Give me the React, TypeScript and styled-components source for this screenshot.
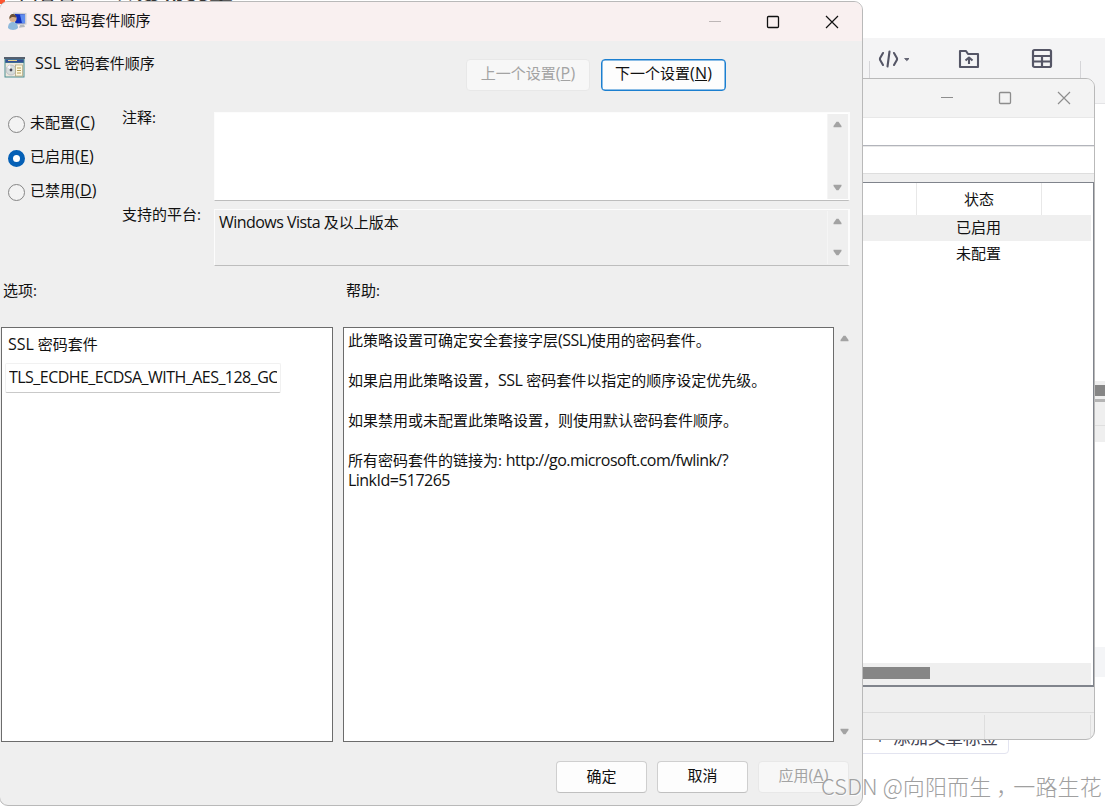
import React from "react";
import styled, { createGlobalStyle, css } from "styled-components";

const Global = createGlobalStyle`
  *, *::before, *::after { box-sizing: border-box; }
  html, body { margin: 0; padding: 0; }
  body {
    width: 1105px; height: 806px; overflow: hidden; background: #fff; color: #111;
    font-family: "Open Sans", "Noto Sans CJK SC", sans-serif;
    font-size: 15px; line-height: 20px;
  }
`;

const Desktop = styled.div`
  position: relative;
  width: 1105px;
  height: 806px;
  overflow: hidden;
  background: #fff;
`;

/* Latin runs are slightly larger and tightened to sit next to the ideographs */
const L = styled.span<{ $ls?: number }>`
  font-size: 16px;
  line-height: 1;
  letter-spacing: ${(p) => p.$ls ?? -0.54}px;
`;

/* ---------- web editor behind the windows ---------- */
const Editor = styled.div`
  display: flex;
  flex-direction: column;
  height: 806px;
`;
const EditorTop = styled.div`
  display: flex;
  height: 38px;
  overflow: hidden;
  color: #333;
`;
const TopText = styled.span<{ $ml: number; $mt: number; $size: number }>`
  margin: ${(p) => p.$mt}px 0 0 ${(p) => p.$ml}px;
  height: 24px;
  font-size: ${(p) => p.$size}px;
  line-height: 24px;
  font-weight: 500;
  white-space: nowrap;
`;
const Logo = styled.span`
  width: 5px;
  height: 4px;
  background: #fc5531;
`;
const EditorBar = styled.div`
  display: flex;
  height: 66px;
  padding-left: 869px;
  background: #f4f4f5;
  border-bottom: 1px solid #e4e4e6;
  color: #555666;
`;
const BarRule = styled.i<{ $ml?: number }>`
  width: 1px;
  margin: 23px 0 0 ${(p) => p.$ml ?? 0}px;
  background: #d5d5d8;
`;
const BarIcon = styled.svg<{ $ml: number }>`
  margin: 9px 0 0 ${(p) => p.$ml}px;
  flex: none;
`;
const EditorBody = styled.div`
  display: flex;
  flex-direction: column;
  align-items: flex-end;
  flex: 1;
  padding-top: 277px;
`;
const Strip = styled.div<{ $h: number; $c: string; $mt?: number }>`
  width: 11px;
  height: ${(p) => p.$h}px;
  margin-top: ${(p) => p.$mt ?? 0}px;
  background: ${(p) => p.$c};
`;
const TagButton = styled.div`
  display: flex;
  gap: 8px;
  width: 160px;
  height: 32px;
  margin: 45px 96px 0 0;
  padding-left: 25px;
  border: 1px solid #e3e4f0;
  border-radius: 4px;
  color: #444554;
  font-size: 17.5px;
  line-height: 28px;
  white-space: nowrap;
`;

/* ---------- shared window parts ---------- */
const WindowFrame = styled.section`
  position: absolute;
  display: flex;
  flex-direction: column;
  overflow: hidden;
  background: #efefef;
  border: 1px solid #b9b9b9;
`;
const Controls = styled.div`
  display: flex;
  margin-left: auto;
`;
const Control = styled.span`
  display: flex;
  width: 58.5px;
  justify-content: center;
  align-items: center;
`;

const WindowControls = ({ color, min }: { color: string; min: string }) => (
  <Controls>
    <Control>
      <svg width="14" height="14" fill="none" stroke={min}><path d="M1 6.5h12" /></svg>
    </Control>
    <Control>
      <svg width="14" height="14" fill="none" stroke={color} strokeWidth="1.3"><rect x="1.5" y="1.5" width="11" height="11" rx="1" /></svg>
    </Control>
    <Control>
      <svg width="14" height="14" fill="none" stroke={color} strokeWidth="1.2"><path d="M1 1l12 12M13 1L1 13" /></svg>
    </Control>
  </Controls>
);

/* ---------- policy list window ---------- */
const ListWindow = styled(WindowFrame)`
  left: 600px;
  top: 78px;
  width: 495px;
  height: 662px;
  border-radius: 9px;
`;
const ListTitle = styled.header`
  display: flex;
  height: 38px;
  padding-right: 1px;
  background: #f3f3f3;
`;
const MenuRow = styled.div<{ $line: string; $h: number }>`
  height: ${(p) => p.$h}px;
  background: #fff;
  border-top: 1px solid #e8e8e8;
  border-bottom: 1px solid ${(p) => p.$line};
`;
const ListBox = styled.div`
  display: flex;
  flex-direction: column;
  height: 505px;
  margin-top: 8px;
  background: #fff;
  border: solid #80848c;
  border-width: 1px 1px 2px 0;
`;
const ListHeader = styled.div`
  display: grid;
  grid-template-columns: 315px 125px 1fr;
  height: 32px;
  > span { border-left: 1px solid #e8e8e8; text-align: center; line-height: 33px; }
`;
const ListRow = styled.div<{ $on?: boolean }>`
  display: grid;
  grid-template-columns: 315px 125px 1fr;
  height: 26px;
  margin-right: 2px;
  line-height: 25px;
  text-align: center;
  background: ${(p) => (p.$on ? "#efefef" : "#fff")};
`;
const HScroll = styled.div`
  height: 22px;
  margin: auto 2px 0 0;
  padding-top: 4px;
  background: #efefef;
  &::before { content: ""; display: block; width: 329px; height: 12px; background: #868686; }
`;
const Status = styled.div`
  display: grid;
  grid-template-columns: 384px 106px 1fr;
  flex: 1;
  margin-top: 25px;
  padding-top: 2px;
  border-top: 1px solid #dcdcdc;
  > span { border-right: 1px solid #dedede; }
`;

/* ---------- policy dialog ---------- */
const Dialog = styled(WindowFrame)`
  left: -1px;
  top: 1px;
  width: 864px;
  height: 805px;
  border-radius: 9px;
`;
const DialogTitle = styled.header`
  display: flex;
  height: 39px;
  padding: 0 1px 0 7px;
  background: #f9f0f0;
  line-height: 37px;
  > svg { margin: 9px 6px 0 0; }
`;
const Heading = styled.div`
  display: flex;
  height: 71px;
  padding: 16px 0 0 4px;
  > svg { flex: none; }
`;
const HeadingText = styled.span`
  width: 431px;
  margin: -4px 0 0 10px;
`;
const Button = styled.button<{ $w: number; $kind?: "off" | "focus"; $lift?: number }>`
  width: ${(p) => p.$w}px;
  height: 32px;
  padding: 0 0 ${(p) => p.$lift ?? 4}px;
  border: 1px solid #cfcfcf;
  border-bottom-color: #c0c0c0;
  border-radius: 4px;
  background: #fdfdfd;
  color: #111;
  font: inherit;
  white-space: nowrap;
  ${(p) => p.$kind === "off" && css`
    border-color: #e8e8e8; background: #f7f7f7; color: #a3a3a3;
  `}
  ${(p) => p.$kind === "focus" && css`
    border-color: #1b7fd0; box-shadow: inset 0 0 0 0.5px #1b7fd0;
  `}
`;
const NavButtons = styled.div`
  display: flex;
  gap: 11px;
  margin-top: 2px;
`;
const Settings = styled.div`
  display: grid;
  grid-template-columns: 122px 92px 636px;
  height: 169px;
`;
const Radios = styled.div`
  display: flex;
  flex-direction: column;
  gap: 14px;
  padding: 1px 0 0 8px;
`;
const Radio = styled.label<{ $on?: boolean }>`
  display: flex;
  height: 20px;
  align-items: center;
  gap: 5px;
  line-height: 18px;
  &::before {
    content: "";
    width: 17px;
    height: 17px;
    margin-top: 2px;
    border-radius: 50%;
    background: ${(p) => (p.$on ? "#fff" : "#f3f3f3")};
    border: ${(p) => (p.$on ? "5px solid #0560b6" : "1px solid #858585")};
  }
  > span { margin-top: -2px; }
`;
const FieldNames = styled.div`
  display: flex;
  flex-direction: column;
  gap: 77px;
  margin-top: -5px;
`;
const Fields = styled.div`
  display: flex;
  flex-direction: column;
  gap: 8px;
`;
const Area = styled.div<{ $h: number; $grey?: boolean }>`
  display: flex;
  justify-content: space-between;
  height: ${(p) => p.$h}px;
  padding-left: 4px;
  border: 1px solid #fcfcfc;
  border-right-width: 2px;
  border-bottom: 1px solid #bdbdbd;
  background: ${(p) => (p.$grey ? "#efefef" : "#fff")};
  line-height: 24px;
`;
const Track = styled.div`
  display: flex;
  flex-direction: column;
  justify-content: space-between;
  width: 21px;
  margin: 1px 0;
  padding: 7px 0 8px 5px;
  background: #efefef;
  border-left: 1px solid #f5f5f5;
`;
const Up = () => <svg width="9" height="7" fill="#a3a3a3"><path d="M3.5 .8h2L8.5 5v1.2h-8V5z" /></svg>;
const Down = () => <svg width="9" height="7" fill="#a3a3a3"><path d="M3.5 6.2h2L8.5 2V.8h-8V2z" /></svg>;

const PaneNames = styled.div`
  display: grid;
  grid-template-columns: 343px 1fr;
  height: 46px;
  padding-left: 3px;
  line-height: 18px;
`;
const Panes = styled.div`
  display: grid;
  grid-template-columns: 332px 491px 20px;
  column-gap: 10px;
  height: 415px;
  margin-left: 1px;
`;
const Pane = styled.div`
  background: #fff;
  border: 1px solid #6c6c6c;
  overflow: hidden;
`;
const OptionName = styled.div`
  margin: 6px 0 0 6px;
`;
const OptionInput = styled.div`
  width: 276px;
  height: 30px;
  margin: 9px 0 0 3px;
  padding: 0 3px;
  border: 1px solid #f1f1f1;
  border-bottom-color: #c9c9c9;
  border-radius: 2px;
  line-height: 27px;
  > span { display: block; overflow: hidden; white-space: nowrap; }
`;
const HelpText = styled.p`
  margin: 2px 0 20px 4px;
  & + & { margin-top: 0; }
`;
const PaneTrack = styled.div`
  display: flex;
  flex-direction: column;
  justify-content: space-between;
  margin-left: -4px;
  padding: 8px 0 7px;
`;
const Footer = styled.footer`
  display: flex;
  gap: 10px;
  padding: 19px 0 0 556px;
`;
const Watermark = styled.div`
  position: absolute;
  left: 821px;
  top: 771px;
  font-size: 22px;
  line-height: 28px;
  letter-spacing: 0.1px;
  font-weight: 300;
  font-family: "Noto Sans CJK SC", sans-serif;
  white-space: nowrap;
  color: #a0a0a0;
  text-shadow: 1px 1px 0 rgba(255, 255, 255, 0.8);
`;
const Comma = styled.span`
  margin: 0 -5px 0 5px;
`;

const UserMonitorIcon = () => (
  <svg width="20" height="20" viewBox="0 0 20 20">
    <path d="M6 1.500L19.500 2V13.500L8 14z" fill="#c9ccd2" />
    <path d="M8 3l10 .6v8.600L8 12.500z" fill="#1230bd" />
    <path d="M13 3.400l5 .3v8.300l-3 .3z" fill="#5f8df0" />
    <path d="M13 14l4-.5 1 2.500-6 .8z" fill="#b5b8bd" />
    <circle cx="6" cy="7.500" r="3.600" fill="#d8b08c" />
    <path d="M2.500 8c-.5-4 2-5.500 4-5s3 2 2.500 3.500C6.500 5.500 4 5.500 2.500 8z" fill="#6b5138" />
    <path d="M1 17c0-4 2-6 4.800-6S11 13 11 17c-2 2.500-8 2.500-10 0z" fill="#8fb9dc" />
  </svg>
);
const PolicyIcon = () => (
  <svg width="21" height="21" viewBox="0 0 21 21">
    <rect x=".5" y="1" width="20" height="19.500" fill="#4d8f92" />
    <rect x="0" y="0" width="21" height="2" fill="#55606e" />
    <rect x="1.500" y="2.500" width="18" height="3" fill="#354f96" />
    <path d="M4 3.500h9" stroke="#e8d48a" />
    <rect x="1.500" y="6" width="18" height="13.500" fill="#ece8dc" />
    <circle cx="7" cy="13" r="5" fill="#d6dcda" stroke="#aab" strokeWidth=".6" />
    <path d="M7 13L3 10l3-2z" fill="#f7f7ff" />
    <circle cx="7" cy="13" r="1.400" fill="#445" />
    <rect x="11.500" y="8" width="7" height="11" fill="#fdf7df" stroke="#a89d77" strokeWidth=".7" />
    <path d="M13 11h4M13 13.500h4M13 16h4" stroke="#b39e55" />
  </svg>
);

const K = ({ k }: { k: string }) => <L $ls={0.2}>(<u>{k}</u>)</L>;

export default function App() {
  return (
    <Desktop>
      <Global />
      <Editor>
        <EditorTop>
          <Logo />
          <TopText $ml={14} $mt={-18} $size={19}>内容管</TopText>
          <TopText $ml={42} $mt={-17} $size={14}>人</TopText>
          <TopText $ml={5} $mt={-20} $size={24}>发布文章</TopText>
        </EditorTop>
        <EditorBar>
          <BarRule />
          <BarIcon $ml={7} width="33" height="24" fill="none" stroke="currentColor" strokeWidth="2.1" strokeLinecap="round" strokeLinejoin="round">
            <path d="M6 6L3 11.200v1.600L6 18M17 6l3 5.200v1.600L17 18M12.500 4.500L10.500 19.500" />
            <path d="M28 11.500h4l-2 2z" fill="currentColor" strokeWidth=".8" />
          </BarIcon>
          <BarIcon $ml={48} width="22" height="24" fill="none" stroke="currentColor" strokeWidth="2.1" strokeLinejoin="round">
            <path d="M2 4h6l2 3h10v13H2zM11 17v-6M7.500 13.500L11 10.500l3.500 3" />
          </BarIcon>
          <BarIcon $ml={51} width="22" height="24" fill="none" stroke="currentColor" strokeWidth="2.2">
            <rect x="2" y="3" width="18" height="17" rx="1.500" />
            <path d="M2 9h18M2 14.500h18M11 9v11" />
          </BarIcon>
          <BarRule $ml={27} />
        </EditorBar>
        <EditorBody>
          <Strip $h={4} $c="#efefef" />
          <Strip $h={11} $c="#868686" />
          <Strip $h={3} $c="#efefef" />
          <Strip $h={3} $c="#b4b4b4" />
          <Strip $h={23} $c="#efefef" />
          <Strip $h={1} $c="#dfdfdf" />
          <Strip $h={16} $c="#efefef" />
          <Strip $h={30} $c="#f4f5f7" $mt={205} />
          <TagButton><span>+</span><span>添加文章标签</span></TagButton>
        </EditorBody>
      </Editor>

      <ListWindow>
        <ListTitle><WindowControls color="#8d8d8d" min="#8d8d8d" /></ListTitle>
        <MenuRow $h={29} $line="#b2b4bb" />
        <MenuRow $h={28} $line="#dedede" />
        <ListBox>
          <ListHeader><i /><span>状态</span><span /></ListHeader>
          <ListRow $on><i /><span>已启用</span></ListRow>
          <ListRow><i /><span>未配置</span></ListRow>
          <HScroll />
        </ListBox>
        <Status><span /><span /></Status>
      </ListWindow>

      <Dialog>
        <DialogTitle>
          <UserMonitorIcon />
          <span><L $ls={-0.8}>SSL</L> 密码套件顺序</span>
          <WindowControls color="#111" min="#bdb6b6" />
        </DialogTitle>
        <Heading>
          <PolicyIcon />
          <HeadingText><L $ls={0}>SSL</L> 密码套件顺序</HeadingText>
          <NavButtons>
            <Button $w={124} $kind="off">上一个设置<K k="P" /></Button>
            <Button $w={125} $kind="focus">下一个设置<K k="N" /></Button>
          </NavButtons>
        </Heading>
        <Settings>
          <Radios>
            <Radio><span>未配置<K k="C" /></span></Radio>
            <Radio $on><span>已启用<K k="E" /></span></Radio>
            <Radio><span>已禁用<K k="D" /></span></Radio>
          </Radios>
          <FieldNames><span>注释:</span><span>支持的平台:</span></FieldNames>
          <Fields>
            <Area $h={89}><span /><Track><Up /><Down /></Track></Area>
            <Area $h={57} $grey><span><L>Windows Vista </L>及以上版本</span><Track><Up /><Down /></Track></Area>
          </Fields>
        </Settings>
        <PaneNames><span>选项:</span><span>帮助:</span></PaneNames>
        <Panes>
          <Pane>
            <OptionName><L $ls={0}>SSL</L> 密码套件</OptionName>
            <OptionInput><span><L>TLS_ECDHE_ECDSA_WITH_AES_128_GCM</L></span></OptionInput>
          </Pane>
          <Pane>
            <HelpText>此策略设置可确定安全套接字层<L>(SSL)</L>使用的密码套件。</HelpText>
            <HelpText>如果启用此策略设置，<L>SSL</L> 密码套件以指定的顺序设定优先级。</HelpText>
            <HelpText>如果禁用或未配置此策略设置，则使用默认密码套件顺序。</HelpText>
            <HelpText>所有密码套件的链接为: <L>http://go.microsoft.com/fwlink/?<br />LinkId=517265</L></HelpText>
          </Pane>
          <PaneTrack><Up /><Down /></PaneTrack>
        </Panes>
        <Footer>
          <Button $w={91} $lift={2}>确定</Button>
          <Button $w={91}>取消</Button>
          <Button $w={91} $kind="off">应用<K k="A" /></Button>
        </Footer>
      </Dialog>
      <Watermark>CSDN @向阳而生<Comma>，</Comma>一路生花</Watermark>
    </Desktop>
  );
}
